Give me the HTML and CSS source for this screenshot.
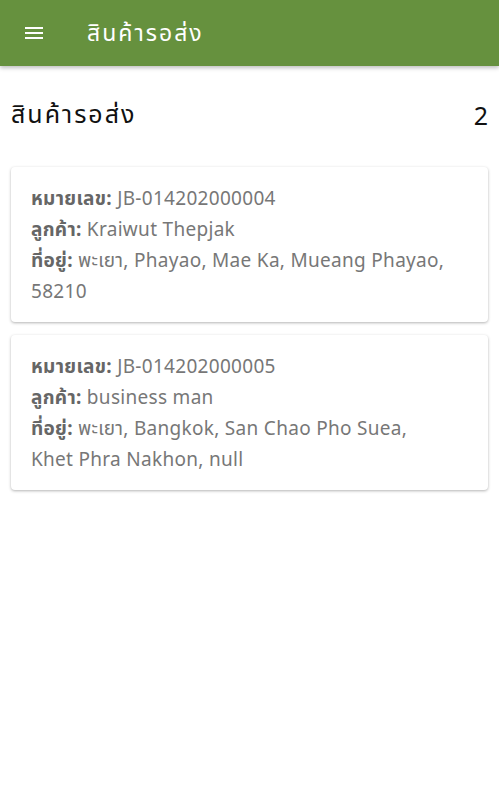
FILE: index.html
```html
<!DOCTYPE html>
<html lang="th">
<head>
<meta charset="utf-8">
<title>สินค้ารอส่ง</title>
<link rel="stylesheet" href="styles.css">
</head>
<body>
<header class="appbar">
  <svg class="menu" width="24" height="24" viewBox="0 0 24 24"><path d="M3 6h18v2H3zM3 11h18v2H3zM3 16h18v2H3z" fill="#fff"/></svg>
  <span class="appbar-title">สินค้ารอส่ง</span>
</header>
<main class="content">
  <div class="heading">
    <span class="heading-title">สินค้ารอส่ง</span>
    <span class="heading-count">2</span>
  </div>
  <div class="card">
    <div class="line"><b>หมายเลข:</b> JB-014202000004</div>
    <div class="line"><b>ลูกค้า:</b> Kraiwut Thepjak</div>
    <div class="line"><b>ที่อยู่:</b> พะเยา, Phayao, Mae Ka, Mueang Phayao, 58210</div>
  </div>
  <div class="card">
    <div class="line"><b>หมายเลข:</b> JB-014202000005</div>
    <div class="line"><b>ลูกค้า:</b> business man</div>
    <div class="line"><b>ที่อยู่:</b> พะเยา, Bangkok, San Chao Pho Suea, Khet Phra Nakhon, null</div>
  </div>
</main>
</body>
</html>
```

FILE: styles.css
```css
* { box-sizing: border-box; }
body {
  margin: 0;
  background: #fff;
  font-family: "Noto Sans", "Noto Sans Thai", "DejaVu Sans", sans-serif;
}
.appbar {
  height: 66px;
  background: #66913e;
  display: flex;
  align-items: center;
  padding: 0 22px;
  gap: 41px;
  box-shadow: 0 2px 4px rgba(0,0,0,0.25);
  color: #fff;
}
.menu { flex: none; }
.appbar-title {
  font-size: 23px;
  letter-spacing: 2px;
  color: #fff;
}
.content {
  padding: 27px 11px 0;
}
.heading {
  display: flex;
  justify-content: space-between;
  align-items: center;
  height: 44px;
  font-size: 25px;
  color: #111;
  margin-bottom: 30px;
}
.heading-title { letter-spacing: 2px; }
.card {
  background: #fff;
  border-radius: 4px;
  box-shadow: 0 1px 3px rgba(0,0,0,0.3);
  padding: 16px 36px 15px 20px;
  margin-bottom: 13px;
  color: #777;
  font-size: 19px;
  letter-spacing: 0.3px;
  line-height: 31px;
}
.card b {
  color: #666;
  font-weight: 700;
}
```
